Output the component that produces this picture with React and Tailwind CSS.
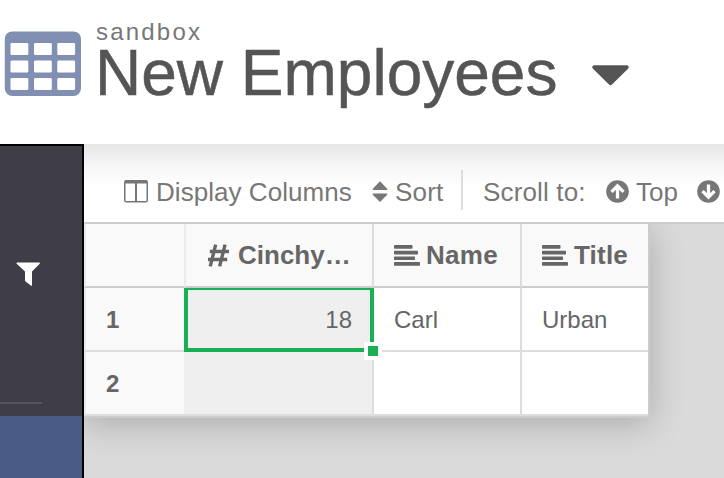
import React from 'react';

function TableIcon() {
  return (
    <svg className="mt-[31px] h-[65px] w-[77px] shrink-0" viewBox="0 0 77 65">
      <rect x="0.8" y="0.4" width="76.2" height="64.6" rx="7.5" fill="#8190b2" />
      {[12, 29.5, 47].map((y) =>
        [6.5, 30, 53.3].map((x) => (
          <rect key={`${x}-${y}`} x={x} y={y} width="17.8" height="12" rx="1.3" fill="#fff" />
        ))
      )}
    </svg>
  );
}

function ColumnsIcon() {
  return (
    <svg className="h-[23px] w-6 shrink-0" viewBox="0 0 24 23" fill="none" stroke="#777">
      <rect x="0.75" y="0.75" width="22.5" height="21" rx="1.5" strokeWidth="1.5" />
      <path d="M1 2H23" strokeWidth="3" />
      <path d="M12 2V22" strokeWidth="2" />
    </svg>
  );
}

function SortIcon() {
  return (
    <svg className="h-[22px] w-4 shrink-0" viewBox="0 0 16 22" fill="#777">
      <path d="M1.3 9Q.1 8.7 .8 7.7L7.2 1Q8 .2 8.8 1L15.2 7.7Q15.9 8.7 14.7 9Z" />
      <path d="M1.3 12.5Q.1 12.8 .8 13.8L7.2 20.3Q8 21.1 8.8 20.3L15.2 13.8Q15.9 12.8 14.7 12.5Z" />
    </svg>
  );
}

function AlignIcon() {
  return (
    <svg className="h-[21px] w-[26px] shrink-0" viewBox="0 0 26 21" fill="#666">
      <rect width="18.5" height="3.8" rx="0.7" />
      <rect y="5.7" width="24" height="3.8" rx="0.7" />
      <rect y="11.4" width="21" height="3.6" rx="0.7" />
      <rect y="17" width="26" height="3.8" rx="0.7" />
    </svg>
  );
}

function FilterIcon() {
  return (
    <svg className="mt-[116px] ml-4 size-6" viewBox="0 0 24 24" fill="#fff">
      <path d="M1.3 .5H23.2Q24.4 .7 23.7 1.8L16 9.6V23Q16 24.3 14.8 23.6L9.6 19.5Q9 19 9 18.2V9.6L.7 1.8Q0 .7 1.3 .5Z" />
    </svg>
  );
}

function HashIcon() {
  return (
    <svg className="h-[23px] w-[25px] shrink-0" viewBox="0 0 25 23" fill="none" stroke="#666" strokeLinecap="square" strokeLinejoin="round">
      <path d="M9.3 2.2L4.6 20.8M18.7 2.2L14 20.8" strokeWidth="3.4" />
      <path d="M3.8 7.5H23M2 15.5H21.2" strokeWidth="3.4" strokeLinecap="butt" />
    </svg>
  );
}

function CircleArrow({ down = false }) {
  return (
    <svg className={down ? 'size-[23px] shrink-0 rotate-180' : 'size-[23px] shrink-0'} viewBox="0 0 23 23" fill="none">
      <circle cx="11.5" cy="11.5" r="11.3" fill="#777" />
      <path d="M11.5 18.5V6.5M5.5 11.8L11.5 5.8L17.5 11.8" stroke="#fff" strokeWidth="3.3" />
    </svg>
  );
}

const grid = 'grid h-16 grid-cols-[100px_190px_148px_126px]';

export default function App() {
  return (
    <div className="flex h-[478px] w-[724px] flex-col overflow-hidden bg-white font-['Liberation_Sans',Arial,sans-serif]">
      <header className="flex h-36 shrink-0 pl-1">
        <TableIcon />
        <div className="ml-[15px] pt-[20px]">
          <div className="h-6 text-2xl leading-6 tracking-[2.2px] text-[#777]">sandbox</div>
          <div className="flex items-center">
            <h1 className="-ml-px text-[64px] leading-[58px] whitespace-nowrap text-[#555] [-webkit-text-stroke:0.5px_#555]">New Employees</h1>
            <svg className="mt-[4px] ml-[35px] h-[21px] w-[37px]" viewBox="0 0 38 21" fill="#555">
              <path d="M2 0H36Q39 1 37 3.5L20.8 19.5Q19 21.3 17.2 19.5L1 3.5Q-1 1 2 0Z" />
            </svg>
          </div>
        </div>
      </header>

      <div className="flex min-h-0 flex-1">
        <aside className="flex w-[84px] shrink-0 flex-col border-t-2 border-r-2 border-black bg-[#3f3e48]">
          <div className="h-[270px] shrink-0">
            <FilterIcon />
            <div className="mt-[116px] h-0.5 w-[42px] bg-[#55545d]" />
          </div>
          <div className="flex-1 bg-[#4a5c85]" />
        </aside>

        <main className="min-w-0 flex-1 overflow-hidden bg-[#dadada]">
          <div className="relative z-10 flex h-20 w-[640px] items-center overflow-hidden border-b-2 border-[#ccc] bg-[linear-gradient(to_bottom,#e6e6e6_0px,#f5f5f5_20px,#fff_42px)] pt-[17px] pl-10 text-[26px] leading-[30px] whitespace-nowrap text-[#777]">
            <ColumnsIcon />
            <span className="ml-2 w-[196px] tracking-[0.05px]">Display Columns</span>
            <span className="ml-5"><SortIcon /></span>
            <span className="ml-[7px] w-[48px] tracking-[0.2px]">Sort</span>
            <div className="-mt-[3px] ml-[18px] h-10 w-0.5 shrink-0 bg-[#ddd]" />
            <span className="ml-5 w-[103px] tracking-[0.15px]">Scroll to:</span>
            <span className="ml-5"><CircleArrow /></span>
            <span className="ml-[7px] w-[43px]">Top</span>
            <span className="ml-[18px]"><CircleArrow down /></span>
          </div>

          <div className="w-[566px] border-r-2 border-b-2 border-[#ccc] text-[#666] shadow-[0_6px_32px_rgba(0,0,0,0.22)]">
            <div className={`${grid} bg-[#f9f9f9] text-[26px] leading-[30px] font-bold *:flex *:items-center *:border-b-2 *:border-b-[#ccc]`}>
              <div className="border-l-2 border-l-[#ebebeb]" />
              <div className="border-r-2 border-l-2 border-r-[#ddd] border-l-[#ebebeb] pl-[20px]">
                <HashIcon />
                <span className="ml-[7px]">Cinchy…</span>
              </div>
              <div className="border-r-2 border-r-[#ddd] pl-5">
                <AlignIcon />
                <span className="ml-[6px] tracking-[0.3px]">Name</span>
              </div>
              <div className="pl-5">
                <AlignIcon />
                <span className="ml-[6px] tracking-[0.2px]">Title</span>
              </div>
            </div>
            <div className={`${grid} bg-white text-2xl *:flex *:items-center *:border-b-2 *:border-b-[#ddd]`}>
              <div className="border-l-2 border-l-[#ebebeb] bg-[#f9f9f9] pt-0.5 pl-5 font-bold">1</div>
              <div className="relative justify-end bg-[#efefef] pt-0.5 pr-5">
                <span className="pr-0.5">18</span>
                <div className="absolute top-0 right-0 -bottom-0.5 left-0 border-x-4 border-t-2 border-b-4 border-[#19b055]" />
                <div className="absolute -right-2 -bottom-2.5 size-[18px] border-4 border-white bg-[#19b055]" />
              </div>
              <div className="border-r-2 border-r-[#ddd] pt-0.5 pl-5">Carl</div>
              <div className="pt-0.5 pl-5">Urban</div>
            </div>
            <div className={`${grid} bg-white text-2xl *:flex *:items-center *:border-b-2 *:border-b-[#ddd]`}>
              <div className="border-l-2 border-l-[#ebebeb] bg-[#f9f9f9] pt-0.5 pl-5 font-bold">2</div>
              <div className="border-r-2 border-r-[#ddd] bg-[#efefef]" />
              <div className="border-r-2 border-r-[#ddd]" />
              <div />
            </div>
          </div>
        </main>
      </div>
    </div>
  );
}
